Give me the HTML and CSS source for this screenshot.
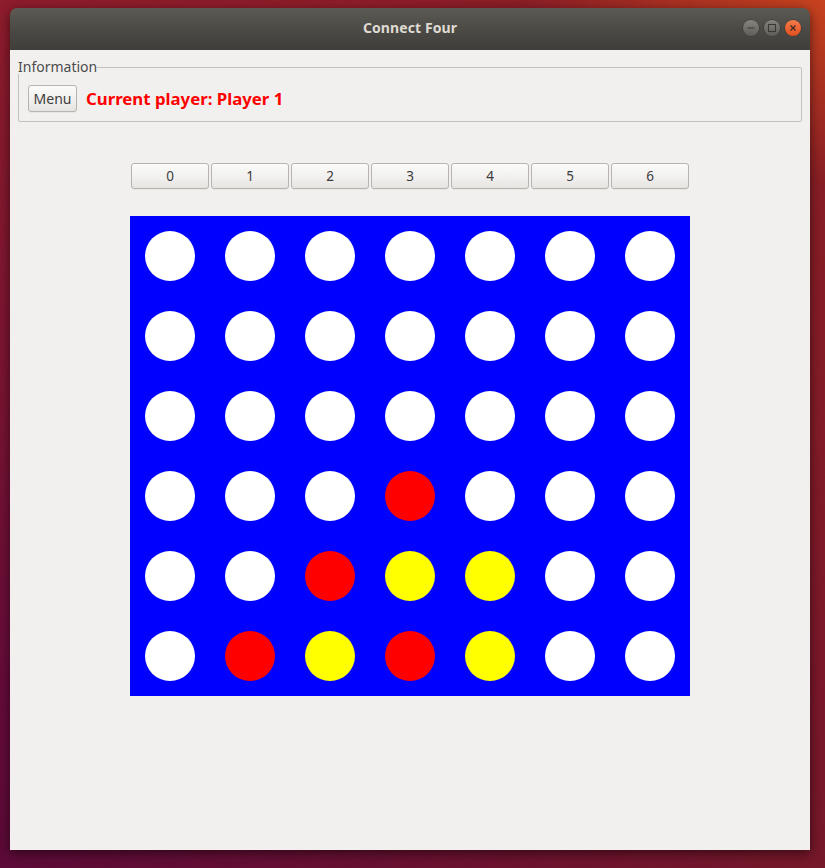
FILE: index.html
```html
<!DOCTYPE html>
<html>
<head>
<meta charset="utf-8">
<title>Connect Four</title>
<link rel="stylesheet" href="styles.css">
</head>
<body>
<div class="desktop">
  <div class="window">
    <div class="titlebar">
      <span class="title">Connect Four</span>
      <div class="controls">
        <span class="wbtn"><svg width="16" height="16" viewBox="0 0 16 16"><line x1="4.5" y1="8" x2="11.5" y2="8" stroke="#3a3935" stroke-width="1.2"/></svg></span>
        <span class="wbtn"><svg width="16" height="16" viewBox="0 0 16 16"><rect x="4.5" y="4.5" width="7" height="7" fill="none" stroke="#3a3935" stroke-width="1.1"/></svg></span>
        <span class="wbtn close"><svg width="16" height="16" viewBox="0 0 16 16"><path d="M5.5 5.5 L10.5 10.5 M10.5 5.5 L5.5 10.5" stroke="#3a2a22" stroke-width="1.2"/></svg></span>
      </div>
    </div>
    <div class="content">
      <fieldset class="info">
        <legend>Information</legend>
        <button class="btn menu">Menu</button>
        <span class="player">Current player: Player 1</span>
      </fieldset>
      <div class="cols">
        <button class="btn col">0</button>
        <button class="btn col">1</button>
        <button class="btn col">2</button>
        <button class="btn col">3</button>
        <button class="btn col">4</button>
        <button class="btn col">5</button>
        <button class="btn col">6</button>
      </div>
      <div class="board">
        <span class="c"></span><span class="c"></span><span class="c"></span><span class="c"></span><span class="c"></span><span class="c"></span><span class="c"></span>
        <span class="c"></span><span class="c"></span><span class="c"></span><span class="c"></span><span class="c"></span><span class="c"></span><span class="c"></span>
        <span class="c"></span><span class="c"></span><span class="c"></span><span class="c"></span><span class="c"></span><span class="c"></span><span class="c"></span>
        <span class="c"></span><span class="c"></span><span class="c"></span><span class="c red"></span><span class="c"></span><span class="c"></span><span class="c"></span>
        <span class="c"></span><span class="c"></span><span class="c red"></span><span class="c yellow"></span><span class="c yellow"></span><span class="c"></span><span class="c"></span>
        <span class="c"></span><span class="c red"></span><span class="c yellow"></span><span class="c red"></span><span class="c yellow"></span><span class="c"></span><span class="c"></span>
      </div>
    </div>
  </div>
</div>
</body>
</html>
```
FILE: styles.css
```css
html, body {
  margin: 0;
  padding: 0;
  width: 825px;
  height: 868px;
  overflow: hidden;
}
.desktop {
  width: 825px;
  height: 868px;
  box-sizing: border-box;
  padding: 8px 15px 18px 10px;
  background:
    radial-gradient(ellipse 420px 260px at 100% 0%, rgba(205, 70, 30, 0.9), rgba(205, 70, 30, 0) 70%),
    linear-gradient(to right, rgba(0,0,0,0) 0%, rgba(140, 35, 30, 0.55) 100%),
    linear-gradient(to bottom, #8e1c2c 0%, #7a1432 45%, #650b3a 80%, #5c0a38 100%);
}
.window {
  width: 800px;
  height: 842px;
  display: flex;
  flex-direction: column;
  border-radius: 7px 7px 0 0;
  box-shadow: 0 3px 12px rgba(0, 0, 0, 0.55);
  overflow: hidden;
}
.titlebar {
  height: 42px;
  flex: none;
  position: relative;
  display: flex;
  align-items: center;
  justify-content: center;
  padding-bottom: 3px;
  box-sizing: border-box;
  background: linear-gradient(to bottom, #5c5a53 0%, #4b4a45 50%, #3f3e3a 100%);
}
.title {
  font-family: "Noto Sans", "DejaVu Sans", sans-serif;
  font-weight: bold;
  font-size: 14px;
  color: #dfdbd2;
  letter-spacing: 0.1px;
}
.controls {
  position: absolute;
  right: 9px;
  top: 12px;
  display: flex;
  gap: 5px;
}
.wbtn {
  width: 16px;
  height: 16px;
  border-radius: 50%;
  background: linear-gradient(to bottom, #86847d, #5f5d57);
  box-shadow: 0 0 0 0.5px #34332f;
  display: block;
}
.wbtn svg { display: block; }
.wbtn.close {
  background: linear-gradient(to bottom, #f47a4c, #e2501e);
}
.content {
  flex: 1;
  background: #f1f0ee;
  padding: 10px 8px 0 8px;
  font-family: "Noto Sans", "DejaVu Sans", sans-serif;
}
.info {
  margin: 0;
  border: 1px solid #c4c1bc;
  border-radius: 2px;
  padding: 11px 9px 9px 9px;
  display: flex;
  align-items: center;
  gap: 9px;
}
.info legend {
  padding: 0;
  margin-left: -10px;
  font-size: 14px;
  color: #4c4c4c;
  line-height: 14px;
}
.btn {
  font-family: "Noto Sans", "DejaVu Sans", sans-serif;
  font-size: 13.5px;
  color: #3c3c3c;
  border: 1px solid #b7b4af;
  border-radius: 3px;
  background: linear-gradient(to bottom, #fbfbfa 0%, #f0efed 60%, #e6e4e1 100%);
  box-shadow: 0 1px 0 rgba(0,0,0,0.04);
  padding: 0;
}
.menu {
  width: 49px;
  height: 27px;
  font-size: 14px;
}
.player {
  color: #ff0000;
  font-weight: bold;
  font-size: 16.8px;
}
.cols {
  margin-top: 41px;
  display: flex;
  justify-content: center;
  gap: 2px;
}
.col {
  width: 78px;
  height: 26px;
}
.board {
  margin: 27px auto 0 auto;
  width: 560px;
  height: 480px;
  box-sizing: border-box;
  background: #0000ff;
  padding: 15px;
  display: grid;
  grid-template-columns: repeat(7, 50px);
  grid-auto-rows: 50px;
  gap: 30px;
}
.c {
  display: block;
  width: 50px;
  height: 50px;
  border-radius: 50%;
  background: #ffffff;
}
.c.red { background: #ff0000; }
.c.yellow { background: #ffff00; }
```
